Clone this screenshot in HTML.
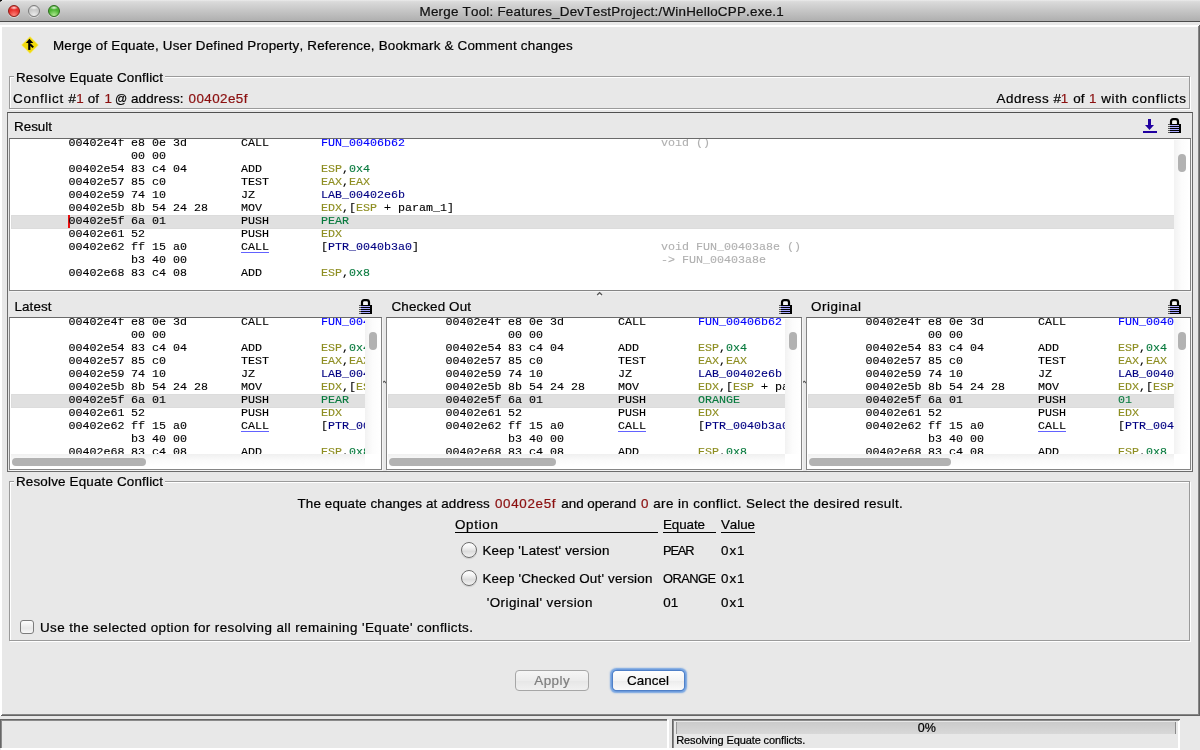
<!DOCTYPE html><html><head><meta charset="utf-8"><style>
html,body{margin:0;padding:0}
body{width:1200px;height:750px;position:relative;overflow:hidden;background:#e8e8e8;font-family:"Liberation Sans",sans-serif;font-kerning:none}
.t{position:absolute;white-space:pre;-webkit-text-stroke-width:0.22px}
.lst{position:absolute;border:1px solid #858585;border-top-color:#6a6a6a;box-shadow:1px 1px 0 #f4f4f4;background:#fff;overflow:hidden}
.m{position:absolute;white-space:pre;font-family:"Liberation Mono",monospace;font-size:11.667px;line-height:13px;height:13px;color:#000;font-kerning:none;-webkit-text-stroke-width:0.12px}
.hl{position:absolute;right:0;height:14px;background:#e0e0e0;box-shadow:inset 0 0 0 1px #dcdcdc}
.vs{position:absolute;background:linear-gradient(90deg,#f2f2f2,#fcfcfc 50%,#fff)}
.hs{position:absolute;background:linear-gradient(180deg,#f0f0f0,#fbfbfb 50%,#fff)}
.th{position:absolute;background:#b2b2b2;border-radius:4px}
#w{position:absolute;left:0;top:0;width:1200px;height:750px;will-change:transform}
</style></head><body><div id="w">
<div style="position:absolute;left:0px;top:0px;width:1200px;height:22px;background:linear-gradient(180deg,#ececec 0%,#dadada 8%,#c6c6c6 50%,#afafaf 100%);border-bottom:1px solid #4a4a4a;box-sizing:border-box"></div>
<div style="position:absolute;left:8px;top:5px;width:12px;height:12px;border-radius:50%;box-sizing:border-box;border:1px solid #8e1c16;background:radial-gradient(ellipse 4px 2px at 50% 18%,rgba(255,255,255,.85),rgba(255,255,255,0) 100%),radial-gradient(circle at 50% 95%,#ff8a80 0%,#e8302c 55%);box-shadow:0 1px 0.5px rgba(255,255,255,.45)"></div>
<div style="position:absolute;left:28px;top:5px;width:12px;height:12px;border-radius:50%;box-sizing:border-box;border:1px solid #7c7c7c;background:radial-gradient(ellipse 4px 2px at 50% 18%,rgba(255,255,255,.85),rgba(255,255,255,0) 100%),radial-gradient(circle at 50% 95%,#eeeeee 0%,#cacaca 55%);box-shadow:0 1px 0.5px rgba(255,255,255,.45)"></div>
<div style="position:absolute;left:48px;top:5px;width:12px;height:12px;border-radius:50%;box-sizing:border-box;border:1px solid #2c6e1c;background:radial-gradient(ellipse 4px 2px at 50% 18%,rgba(255,255,255,.85),rgba(255,255,255,0) 100%),radial-gradient(circle at 50% 95%,#b4ec96 0%,#4cb432 55%);box-shadow:0 1px 0.5px rgba(255,255,255,.45)"></div>
<div style="position:absolute;left:0;top:0;width:2px;height:1px;background:#111"></div><div style="position:absolute;left:0;top:1px;width:1px;height:1px;background:#555"></div>
<div class="t " style="left:419.50px;top:4px;line-height:15px;height:15px;font-size:13.4px;letter-spacing:0.230px;color:#111">Merge Tool: Features_DevTestProject:/WinHelloCPP.exe.1</div>
<div style="position:absolute;left:0px;top:25px;width:1200px;height:2px;background:#fff"></div>
<div style="position:absolute;left:0px;top:25px;width:2px;height:691px;background:#fff"></div>
<div style="position:absolute;left:1198px;top:26px;width:1px;height:690px;background:#868686"></div>
<div style="position:absolute;left:1199px;top:25px;width:1px;height:691px;background:#646464"></div>
<div style="position:absolute;left:2px;top:714px;width:1197px;height:1px;background:#868686"></div>
<div style="position:absolute;left:1px;top:715px;width:1199px;height:1px;background:#646464"></div>
<svg style="position:absolute;left:20px;top:35px" width="20" height="20" viewBox="20 35 20 20">
<polygon points="30,36.6 38.4,45 30,53.4 21.6,45" fill="#f2da0c" stroke="#f6ec80" stroke-opacity=".7" stroke-width="0.8"/>
<polygon points="29.4,38.7 33.3,42.9 25.9,42.9" fill="#000"/>
<rect x="28.2" y="42" width="2.2" height="7.9" fill="#000"/>
<path d="M30 44.2 L33.2 47.4" stroke="#000" stroke-width="2"/>
</svg>
<div class="t " style="left:53.00px;top:38px;line-height:15px;height:15px;font-size:13.4px;letter-spacing:0.198px;color:#000">Merge of Equate, User Defined Property, Reference, Bookmark &amp; Comment changes</div>
<div style="position:absolute;left:10px;top:77px;width:1181px;height:33px;border:1px solid #fff;box-sizing:border-box"></div>
<div style="position:absolute;left:9px;top:76px;width:1181px;height:33px;border:1px solid #9a9a9a;box-sizing:border-box"></div>
<div style="position:absolute;left:14px;top:70px;width:151px;height:14px;background:#e8e8e8"></div>
<div class="t " style="left:16.00px;top:70px;line-height:15px;height:15px;font-size:13.4px;letter-spacing:0.181px;color:#000">Resolve Equate Conflict</div>
<div class="t " style="left:13.00px;top:91px;line-height:15px;height:15px;font-size:13.4px;letter-spacing:0.794px;color:#000">Conflict #</div>
<div class="t " style="left:76.17px;top:91px;line-height:15px;height:15px;font-size:13.4px;letter-spacing:0.000px;color:#8b1010">1</div>
<div class="t " style="left:87.81px;top:91px;line-height:15px;height:15px;font-size:13.4px;letter-spacing:0.000px;color:#000">of</div>
<div class="t " style="left:104.42px;top:91px;line-height:15px;height:15px;font-size:13.4px;letter-spacing:0.000px;color:#8b1010">1</div>
<div class="t " style="left:115.01px;top:92px;line-height:14px;height:14px;font-size:12px;letter-spacing:0.000px;color:#000">@</div>
<div class="t " style="left:131.00px;top:91px;line-height:15px;height:15px;font-size:13.4px;letter-spacing:0.158px;color:#000">address:</div>
<div class="t " style="left:188.50px;top:91px;line-height:15px;height:15px;font-size:13.4px;letter-spacing:0.444px;color:#8b1010">00402e5f</div>
<div class="t " style="left:996.60px;top:91px;line-height:15px;height:15px;font-size:13.4px;letter-spacing:0.508px;color:#000">Address #</div>
<div class="t " style="left:1060.77px;top:91px;line-height:15px;height:15px;font-size:13.4px;letter-spacing:0.000px;color:#8b1010">1</div>
<div class="t " style="left:1073.21px;top:91px;line-height:15px;height:15px;font-size:13.4px;letter-spacing:0.000px;color:#000">of</div>
<div class="t " style="left:1088.92px;top:91px;line-height:15px;height:15px;font-size:13.4px;letter-spacing:0.000px;color:#8b1010">1</div>
<div class="t " style="left:1101.20px;top:91px;line-height:15px;height:15px;font-size:13.4px;letter-spacing:0.680px;color:#000">with conflicts</div>
<div style="position:absolute;left:7px;top:112px;width:1186px;height:360px;border:1px solid #6c6c6c;border-top-color:#505050;box-sizing:border-box"></div>
<div class="t " style="left:14.00px;top:119px;line-height:15px;height:15px;font-size:13.4px;letter-spacing:0.004px;color:#000">Result</div>
<svg style="position:absolute;left:1143px;top:119px" width="14" height="14" viewBox="0 0 14 14" shape-rendering="crispEdges">
<rect x="5" y="0" width="3" height="6" fill="#2000a0"/><polygon points="2,6 11,6 6.5,11" fill="#2000a0" shape-rendering="geometricPrecision"/><rect x="0" y="12" width="14" height="2" fill="#2000a0"/></svg>
<svg style="position:absolute;left:1168px;top:118px" width="13" height="15" viewBox="0 0 13 15" shape-rendering="crispEdges">
<path d="M3 7 V3.4 Q3 1.1 5.3 1.1 H7.7 Q10 1.1 10 3.4 V7" fill="#f6f6f6" stroke="#000" stroke-width="2.2" shape-rendering="geometricPrecision"/>
<rect x="2" y="6" width="11" height="9" fill="#000"/>
<rect x="2" y="7" width="9" height="1" fill="#a8a8ff"/><rect x="2" y="9" width="9" height="1" fill="#a8a8ff"/><rect x="2" y="11" width="9" height="1" fill="#a8a8ff"/><rect x="2" y="13" width="9" height="1" fill="#a8a8ff"/>
<rect x="0" y="6" width="2" height="1" fill="#555"/><rect x="0" y="8" width="2" height="1" fill="#555"/><rect x="0" y="10" width="2" height="1" fill="#555"/><rect x="0" y="12" width="2" height="1" fill="#555"/><rect x="0" y="14" width="2" height="1" fill="#555"/>
</svg>
<div class="lst" style="left:9px;top:138px;width:1180px;height:151px">
<div class="m" style="left:58.6px;top:-2px;">00402e4f</div>
<div class="m" style="left:121px;top:-2px;">e8 0e 3d</div>
<div class="m" style="left:231px;top:-2px;">CALL</div>
<div class="m" style="left:311px;top:-2px;"><span style="color:#0000ff">FUN_00406b62</span></div>
<div class="m" style="left:651px;top:-2px;color:#b0b0b0">void ()</div>
<div class="m" style="left:121px;top:11px;">00 00</div>
<div class="m" style="left:58.6px;top:24px;">00402e54</div>
<div class="m" style="left:121px;top:24px;">83 c4 04</div>
<div class="m" style="left:231px;top:24px;">ADD</div>
<div class="m" style="left:311px;top:24px;"><span style="color:#8e8e22">ESP</span>,<span style="color:#087a3e">0x4</span></div>
<div class="m" style="left:58.6px;top:37px;">00402e57</div>
<div class="m" style="left:121px;top:37px;">85 c0</div>
<div class="m" style="left:231px;top:37px;">TEST</div>
<div class="m" style="left:311px;top:37px;"><span style="color:#8e8e22">EAX</span>,<span style="color:#8e8e22">EAX</span></div>
<div class="m" style="left:58.6px;top:50px;">00402e59</div>
<div class="m" style="left:121px;top:50px;">74 10</div>
<div class="m" style="left:231px;top:50px;">JZ</div>
<div class="m" style="left:311px;top:50px;"><span style="color:#000082">LAB_00402e6b</span></div>
<div class="m" style="left:58.6px;top:63px;">00402e5b</div>
<div class="m" style="left:121px;top:63px;">8b 54 24 28</div>
<div class="m" style="left:231px;top:63px;">MOV</div>
<div class="m" style="left:311px;top:63px;"><span style="color:#8e8e22">EDX</span>,[<span style="color:#8e8e22">ESP</span> + param_1]</div>
<div class="hl" style="top:76px;left:1px"></div>
<div style="position:absolute;left:58px;top:76px;width:2px;height:13px;background:#e81010"></div>
<div class="m" style="left:58.6px;top:76px;">00402e5f</div>
<div class="m" style="left:121px;top:76px;">6a 01</div>
<div class="m" style="left:231px;top:76px;">PUSH</div>
<div class="m" style="left:311px;top:76px;"><span style="color:#087a3e">PEAR</span></div>
<div class="m" style="left:58.6px;top:89px;">00402e61</div>
<div class="m" style="left:121px;top:89px;">52</div>
<div class="m" style="left:231px;top:89px;">PUSH</div>
<div class="m" style="left:311px;top:89px;"><span style="color:#8e8e22">EDX</span></div>
<div class="m" style="left:58.6px;top:102px;">00402e62</div>
<div class="m" style="left:121px;top:102px;">ff 15 a0</div>
<div class="m" style="left:231px;top:102px;"><span style="border-bottom:1px solid #6262ff;display:inline-block;height:11px;line-height:13px">CALL</span></div>
<div class="m" style="left:311px;top:102px;">[<span style="color:#000082">PTR_0040b3a0</span>]</div>
<div class="m" style="left:651px;top:102px;color:#b0b0b0">void FUN_00403a8e ()</div>
<div class="m" style="left:121px;top:115px;">b3 40 00</div>
<div class="m" style="left:651px;top:115px;color:#b0b0b0">-&gt; FUN_00403a8e</div>
<div class="m" style="left:58.6px;top:128px;">00402e68</div>
<div class="m" style="left:121px;top:128px;">83 c4 08</div>
<div class="m" style="left:231px;top:128px;">ADD</div>
<div class="m" style="left:311px;top:128px;"><span style="color:#8e8e22">ESP</span>,<span style="color:#087a3e">0x8</span></div>
<div style="position:absolute;left:1164px;top:0;width:16px;height:151px;background:#fff"></div>
<div class="vs" style="left:1164px;top:1px;width:15px;height:150px"><div class="th" style="left:4px;top:14px;width:8px;height:18px"></div></div>
</div>
<svg style="position:absolute;left:596px;top:291px" width="8" height="6" viewBox="0 0 8 6"><path d="M1.2 4 L3.6 1.6 L6 4" fill="none" stroke="#555" stroke-width="1.3"/><path d="M2.5 4.6 L5 4.6" stroke="#fff" stroke-width="1"/></svg>
<svg style="position:absolute;left:381.5px;top:380px" width="5" height="5" viewBox="0 0 5 5"><path d="M0.3 3 L2.2 1.2 L4.2 3" fill="none" stroke="#555" stroke-width="1.1"/></svg>
<svg style="position:absolute;left:801.5px;top:380px" width="5" height="5" viewBox="0 0 5 5"><path d="M0.3 3 L2.2 1.2 L4.2 3" fill="none" stroke="#555" stroke-width="1.1"/></svg>
<div class="t " style="left:14.50px;top:299px;line-height:15px;height:15px;font-size:13.4px;letter-spacing:0.099px;color:#000">Latest</div>
<svg style="position:absolute;left:359px;top:299px" width="13" height="15" viewBox="0 0 13 15" shape-rendering="crispEdges">
<path d="M3 7 V3.4 Q3 1.1 5.3 1.1 H7.7 Q10 1.1 10 3.4 V7" fill="#f6f6f6" stroke="#000" stroke-width="2.2" shape-rendering="geometricPrecision"/>
<rect x="2" y="6" width="11" height="9" fill="#000"/>
<rect x="2" y="7" width="9" height="1" fill="#a8a8ff"/><rect x="2" y="9" width="9" height="1" fill="#a8a8ff"/><rect x="2" y="11" width="9" height="1" fill="#a8a8ff"/><rect x="2" y="13" width="9" height="1" fill="#a8a8ff"/>
<rect x="0" y="6" width="2" height="1" fill="#555"/><rect x="0" y="8" width="2" height="1" fill="#555"/><rect x="0" y="10" width="2" height="1" fill="#555"/><rect x="0" y="12" width="2" height="1" fill="#555"/><rect x="0" y="14" width="2" height="1" fill="#555"/>
</svg>
<div class="lst" style="left:9px;top:317px;width:371px;height:151px">
<div class="m" style="left:58.6px;top:-2px;">00402e4f</div>
<div class="m" style="left:121px;top:-2px;">e8 0e 3d</div>
<div class="m" style="left:231px;top:-2px;">CALL</div>
<div class="m" style="left:311px;top:-2px;"><span style="color:#0000ff">FUN_00406b62</span></div>
<div class="m" style="left:651px;top:-2px;color:#b0b0b0">void ()</div>
<div class="m" style="left:121px;top:11px;">00 00</div>
<div class="m" style="left:58.6px;top:24px;">00402e54</div>
<div class="m" style="left:121px;top:24px;">83 c4 04</div>
<div class="m" style="left:231px;top:24px;">ADD</div>
<div class="m" style="left:311px;top:24px;"><span style="color:#8e8e22">ESP</span>,<span style="color:#087a3e">0x4</span></div>
<div class="m" style="left:58.6px;top:37px;">00402e57</div>
<div class="m" style="left:121px;top:37px;">85 c0</div>
<div class="m" style="left:231px;top:37px;">TEST</div>
<div class="m" style="left:311px;top:37px;"><span style="color:#8e8e22">EAX</span>,<span style="color:#8e8e22">EAX</span></div>
<div class="m" style="left:58.6px;top:50px;">00402e59</div>
<div class="m" style="left:121px;top:50px;">74 10</div>
<div class="m" style="left:231px;top:50px;">JZ</div>
<div class="m" style="left:311px;top:50px;"><span style="color:#000082">LAB_00402e6b</span></div>
<div class="m" style="left:58.6px;top:63px;">00402e5b</div>
<div class="m" style="left:121px;top:63px;">8b 54 24 28</div>
<div class="m" style="left:231px;top:63px;">MOV</div>
<div class="m" style="left:311px;top:63px;"><span style="color:#8e8e22">EDX</span>,[<span style="color:#8e8e22">ESP</span> + param_1]</div>
<div class="hl" style="top:76px;left:1px"></div>
<div class="m" style="left:58.6px;top:76px;">00402e5f</div>
<div class="m" style="left:121px;top:76px;">6a 01</div>
<div class="m" style="left:231px;top:76px;">PUSH</div>
<div class="m" style="left:311px;top:76px;"><span style="color:#087a3e">PEAR</span></div>
<div class="m" style="left:58.6px;top:89px;">00402e61</div>
<div class="m" style="left:121px;top:89px;">52</div>
<div class="m" style="left:231px;top:89px;">PUSH</div>
<div class="m" style="left:311px;top:89px;"><span style="color:#8e8e22">EDX</span></div>
<div class="m" style="left:58.6px;top:102px;">00402e62</div>
<div class="m" style="left:121px;top:102px;">ff 15 a0</div>
<div class="m" style="left:231px;top:102px;"><span style="border-bottom:1px solid #6262ff;display:inline-block;height:11px;line-height:13px">CALL</span></div>
<div class="m" style="left:311px;top:102px;">[<span style="color:#000082">PTR_0040b3a0</span>]</div>
<div class="m" style="left:651px;top:102px;color:#b0b0b0">void FUN_00403a8e ()</div>
<div class="m" style="left:121px;top:115px;">b3 40 00</div>
<div class="m" style="left:651px;top:115px;color:#b0b0b0">-&gt; FUN_00403a8e</div>
<div class="m" style="left:58.6px;top:128px;">00402e68</div>
<div class="m" style="left:121px;top:128px;">83 c4 08</div>
<div class="m" style="left:231px;top:128px;">ADD</div>
<div class="m" style="left:311px;top:128px;"><span style="color:#8e8e22">ESP</span>,<span style="color:#087a3e">0x8</span></div>
<div style="position:absolute;left:0;top:136px;width:371px;height:15px;background:#fff"></div><div class="hs" style="left:1px;top:136px;width:354px;height:14px"><div class="th" style="left:1px;top:4px;width:134px;height:8px"></div></div>
<div style="position:absolute;left:355px;top:0;width:16px;height:136px;background:#fff"></div>
<div class="vs" style="left:355px;top:1px;width:15px;height:135px"><div class="th" style="left:4px;top:13px;width:8px;height:18px"></div></div>
</div>
<div class="t " style="left:391.50px;top:299px;line-height:15px;height:15px;font-size:13.4px;letter-spacing:0.129px;color:#000">Checked Out</div>
<svg style="position:absolute;left:779px;top:299px" width="13" height="15" viewBox="0 0 13 15" shape-rendering="crispEdges">
<path d="M3 7 V3.4 Q3 1.1 5.3 1.1 H7.7 Q10 1.1 10 3.4 V7" fill="#f6f6f6" stroke="#000" stroke-width="2.2" shape-rendering="geometricPrecision"/>
<rect x="2" y="6" width="11" height="9" fill="#000"/>
<rect x="2" y="7" width="9" height="1" fill="#a8a8ff"/><rect x="2" y="9" width="9" height="1" fill="#a8a8ff"/><rect x="2" y="11" width="9" height="1" fill="#a8a8ff"/><rect x="2" y="13" width="9" height="1" fill="#a8a8ff"/>
<rect x="0" y="6" width="2" height="1" fill="#555"/><rect x="0" y="8" width="2" height="1" fill="#555"/><rect x="0" y="10" width="2" height="1" fill="#555"/><rect x="0" y="12" width="2" height="1" fill="#555"/><rect x="0" y="14" width="2" height="1" fill="#555"/>
</svg>
<div class="lst" style="left:386px;top:317px;width:414px;height:151px">
<div class="m" style="left:58.6px;top:-2px;">00402e4f</div>
<div class="m" style="left:121px;top:-2px;">e8 0e 3d</div>
<div class="m" style="left:231px;top:-2px;">CALL</div>
<div class="m" style="left:311px;top:-2px;"><span style="color:#0000ff">FUN_00406b62</span></div>
<div class="m" style="left:651px;top:-2px;color:#b0b0b0">void ()</div>
<div class="m" style="left:121px;top:11px;">00 00</div>
<div class="m" style="left:58.6px;top:24px;">00402e54</div>
<div class="m" style="left:121px;top:24px;">83 c4 04</div>
<div class="m" style="left:231px;top:24px;">ADD</div>
<div class="m" style="left:311px;top:24px;"><span style="color:#8e8e22">ESP</span>,<span style="color:#087a3e">0x4</span></div>
<div class="m" style="left:58.6px;top:37px;">00402e57</div>
<div class="m" style="left:121px;top:37px;">85 c0</div>
<div class="m" style="left:231px;top:37px;">TEST</div>
<div class="m" style="left:311px;top:37px;"><span style="color:#8e8e22">EAX</span>,<span style="color:#8e8e22">EAX</span></div>
<div class="m" style="left:58.6px;top:50px;">00402e59</div>
<div class="m" style="left:121px;top:50px;">74 10</div>
<div class="m" style="left:231px;top:50px;">JZ</div>
<div class="m" style="left:311px;top:50px;"><span style="color:#000082">LAB_00402e6b</span></div>
<div class="m" style="left:58.6px;top:63px;">00402e5b</div>
<div class="m" style="left:121px;top:63px;">8b 54 24 28</div>
<div class="m" style="left:231px;top:63px;">MOV</div>
<div class="m" style="left:311px;top:63px;"><span style="color:#8e8e22">EDX</span>,[<span style="color:#8e8e22">ESP</span> + param_1]</div>
<div class="hl" style="top:76px;left:1px"></div>
<div class="m" style="left:58.6px;top:76px;">00402e5f</div>
<div class="m" style="left:121px;top:76px;">6a 01</div>
<div class="m" style="left:231px;top:76px;">PUSH</div>
<div class="m" style="left:311px;top:76px;"><span style="color:#087a3e">ORANGE</span></div>
<div class="m" style="left:58.6px;top:89px;">00402e61</div>
<div class="m" style="left:121px;top:89px;">52</div>
<div class="m" style="left:231px;top:89px;">PUSH</div>
<div class="m" style="left:311px;top:89px;"><span style="color:#8e8e22">EDX</span></div>
<div class="m" style="left:58.6px;top:102px;">00402e62</div>
<div class="m" style="left:121px;top:102px;">ff 15 a0</div>
<div class="m" style="left:231px;top:102px;"><span style="border-bottom:1px solid #6262ff;display:inline-block;height:11px;line-height:13px">CALL</span></div>
<div class="m" style="left:311px;top:102px;">[<span style="color:#000082">PTR_0040b3a0</span>]</div>
<div class="m" style="left:651px;top:102px;color:#b0b0b0">void FUN_00403a8e ()</div>
<div class="m" style="left:121px;top:115px;">b3 40 00</div>
<div class="m" style="left:651px;top:115px;color:#b0b0b0">-&gt; FUN_00403a8e</div>
<div class="m" style="left:58.6px;top:128px;">00402e68</div>
<div class="m" style="left:121px;top:128px;">83 c4 08</div>
<div class="m" style="left:231px;top:128px;">ADD</div>
<div class="m" style="left:311px;top:128px;"><span style="color:#8e8e22">ESP</span>,<span style="color:#087a3e">0x8</span></div>
<div style="position:absolute;left:0;top:136px;width:414px;height:15px;background:#fff"></div><div class="hs" style="left:1px;top:136px;width:397px;height:14px"><div class="th" style="left:1px;top:4px;width:167px;height:8px"></div></div>
<div style="position:absolute;left:398px;top:0;width:16px;height:136px;background:#fff"></div>
<div class="vs" style="left:398px;top:1px;width:15px;height:135px"><div class="th" style="left:4px;top:13px;width:8px;height:18px"></div></div>
</div>
<div class="t " style="left:811.00px;top:299px;line-height:15px;height:15px;font-size:13.4px;letter-spacing:0.547px;color:#000">Original</div>
<svg style="position:absolute;left:1168px;top:299px" width="13" height="15" viewBox="0 0 13 15" shape-rendering="crispEdges">
<path d="M3 7 V3.4 Q3 1.1 5.3 1.1 H7.7 Q10 1.1 10 3.4 V7" fill="#f6f6f6" stroke="#000" stroke-width="2.2" shape-rendering="geometricPrecision"/>
<rect x="2" y="6" width="11" height="9" fill="#000"/>
<rect x="2" y="7" width="9" height="1" fill="#a8a8ff"/><rect x="2" y="9" width="9" height="1" fill="#a8a8ff"/><rect x="2" y="11" width="9" height="1" fill="#a8a8ff"/><rect x="2" y="13" width="9" height="1" fill="#a8a8ff"/>
<rect x="0" y="6" width="2" height="1" fill="#555"/><rect x="0" y="8" width="2" height="1" fill="#555"/><rect x="0" y="10" width="2" height="1" fill="#555"/><rect x="0" y="12" width="2" height="1" fill="#555"/><rect x="0" y="14" width="2" height="1" fill="#555"/>
</svg>
<div class="lst" style="left:806px;top:317px;width:383px;height:151px">
<div class="m" style="left:58.6px;top:-2px;">00402e4f</div>
<div class="m" style="left:121px;top:-2px;">e8 0e 3d</div>
<div class="m" style="left:231px;top:-2px;">CALL</div>
<div class="m" style="left:311px;top:-2px;"><span style="color:#0000ff">FUN_00406b62</span></div>
<div class="m" style="left:651px;top:-2px;color:#b0b0b0">void ()</div>
<div class="m" style="left:121px;top:11px;">00 00</div>
<div class="m" style="left:58.6px;top:24px;">00402e54</div>
<div class="m" style="left:121px;top:24px;">83 c4 04</div>
<div class="m" style="left:231px;top:24px;">ADD</div>
<div class="m" style="left:311px;top:24px;"><span style="color:#8e8e22">ESP</span>,<span style="color:#087a3e">0x4</span></div>
<div class="m" style="left:58.6px;top:37px;">00402e57</div>
<div class="m" style="left:121px;top:37px;">85 c0</div>
<div class="m" style="left:231px;top:37px;">TEST</div>
<div class="m" style="left:311px;top:37px;"><span style="color:#8e8e22">EAX</span>,<span style="color:#8e8e22">EAX</span></div>
<div class="m" style="left:58.6px;top:50px;">00402e59</div>
<div class="m" style="left:121px;top:50px;">74 10</div>
<div class="m" style="left:231px;top:50px;">JZ</div>
<div class="m" style="left:311px;top:50px;"><span style="color:#000082">LAB_00402e6b</span></div>
<div class="m" style="left:58.6px;top:63px;">00402e5b</div>
<div class="m" style="left:121px;top:63px;">8b 54 24 28</div>
<div class="m" style="left:231px;top:63px;">MOV</div>
<div class="m" style="left:311px;top:63px;"><span style="color:#8e8e22">EDX</span>,[<span style="color:#8e8e22">ESP</span> + param_1]</div>
<div class="hl" style="top:76px;left:1px"></div>
<div class="m" style="left:58.6px;top:76px;">00402e5f</div>
<div class="m" style="left:121px;top:76px;">6a 01</div>
<div class="m" style="left:231px;top:76px;">PUSH</div>
<div class="m" style="left:311px;top:76px;"><span style="color:#087a3e">01</span></div>
<div class="m" style="left:58.6px;top:89px;">00402e61</div>
<div class="m" style="left:121px;top:89px;">52</div>
<div class="m" style="left:231px;top:89px;">PUSH</div>
<div class="m" style="left:311px;top:89px;"><span style="color:#8e8e22">EDX</span></div>
<div class="m" style="left:58.6px;top:102px;">00402e62</div>
<div class="m" style="left:121px;top:102px;">ff 15 a0</div>
<div class="m" style="left:231px;top:102px;"><span style="border-bottom:1px solid #6262ff;display:inline-block;height:11px;line-height:13px">CALL</span></div>
<div class="m" style="left:311px;top:102px;">[<span style="color:#000082">PTR_0040b3a0</span>]</div>
<div class="m" style="left:651px;top:102px;color:#b0b0b0">void FUN_00403a8e ()</div>
<div class="m" style="left:121px;top:115px;">b3 40 00</div>
<div class="m" style="left:651px;top:115px;color:#b0b0b0">-&gt; FUN_00403a8e</div>
<div class="m" style="left:58.6px;top:128px;">00402e68</div>
<div class="m" style="left:121px;top:128px;">83 c4 08</div>
<div class="m" style="left:231px;top:128px;">ADD</div>
<div class="m" style="left:311px;top:128px;"><span style="color:#8e8e22">ESP</span>,<span style="color:#087a3e">0x8</span></div>
<div style="position:absolute;left:0;top:136px;width:383px;height:15px;background:#fff"></div><div class="hs" style="left:1px;top:136px;width:366px;height:14px"><div class="th" style="left:1px;top:4px;width:142px;height:8px"></div></div>
<div style="position:absolute;left:367px;top:0;width:16px;height:136px;background:#fff"></div>
<div class="vs" style="left:367px;top:1px;width:15px;height:135px"><div class="th" style="left:4px;top:13px;width:8px;height:18px"></div></div>
</div>
<div style="position:absolute;left:10px;top:482px;width:1181px;height:160px;border:1px solid #fff;box-sizing:border-box"></div>
<div style="position:absolute;left:9px;top:481px;width:1181px;height:160px;border:1px solid #9a9a9a;box-sizing:border-box"></div>
<div style="position:absolute;left:14px;top:474px;width:151px;height:14px;background:#e8e8e8"></div>
<div class="t " style="left:16.00px;top:474px;line-height:15px;height:15px;font-size:13.4px;letter-spacing:0.181px;color:#000">Resolve Equate Conflict</div>
<div class="t " style="left:297.50px;top:496px;line-height:15px;height:15px;font-size:13.4px;letter-spacing:0.137px;color:#000">The equate changes at address</div>
<div class="t " style="left:495.00px;top:496px;line-height:15px;height:15px;font-size:13.4px;letter-spacing:0.673px;color:#8b1010">00402e5f</div>
<div class="t " style="left:561.30px;top:496px;line-height:15px;height:15px;font-size:13.4px;letter-spacing:-0.026px;color:#000">and operand</div>
<div class="t " style="left:641.07px;top:496px;line-height:15px;height:15px;font-size:13.4px;letter-spacing:0.000px;color:#8b1010">0</div>
<div class="t " style="left:653.30px;top:496px;line-height:15px;height:15px;font-size:13.4px;letter-spacing:0.377px;color:#000">are in conflict. Select the desired result.</div>
<div class="t " style="left:455.00px;top:517px;line-height:15px;height:15px;font-size:13.4px;letter-spacing:0.704px;color:#000">Option</div>
<div style="position:absolute;left:455px;top:532px;width:203px;height:1px;background:#000"></div>
<div class="t " style="left:663.00px;top:517px;line-height:15px;height:15px;font-size:13.4px;letter-spacing:-0.094px;color:#000">Equate</div>
<div style="position:absolute;left:663px;top:532px;width:53px;height:1px;background:#000"></div>
<div class="t " style="left:721.00px;top:517px;line-height:15px;height:15px;font-size:13.4px;letter-spacing:-0.069px;color:#000">Value</div>
<div style="position:absolute;left:721px;top:532px;width:34px;height:1px;background:#000"></div>
<div style="position:absolute;left:461px;top:542px;width:16px;height:16px;border-radius:50%;box-sizing:border-box;border:1px solid #6c6c6c;background:linear-gradient(180deg,#ffffff 0%,#f4f4f4 30%,#dcdcdc 60%,#f2f2f2 100%);box-shadow:0 1px 1px rgba(0,0,0,.12)"></div>
<div class="t " style="left:482.50px;top:543px;line-height:15px;height:15px;font-size:13.4px;letter-spacing:0.172px;color:#000">Keep 'Latest' version</div>
<div class="t " style="left:663.00px;top:543px;line-height:15px;height:15px;font-size:12.8px;letter-spacing:-1.119px;color:#000">PEAR</div>
<div class="t " style="left:721.00px;top:543px;line-height:15px;height:15px;font-size:13.4px;letter-spacing:0.948px;color:#000">0x1</div>
<div style="position:absolute;left:461px;top:570px;width:16px;height:16px;border-radius:50%;box-sizing:border-box;border:1px solid #6c6c6c;background:linear-gradient(180deg,#ffffff 0%,#f4f4f4 30%,#dcdcdc 60%,#f2f2f2 100%);box-shadow:0 1px 1px rgba(0,0,0,.12)"></div>
<div class="t " style="left:482.50px;top:571px;line-height:15px;height:15px;font-size:13.4px;letter-spacing:0.189px;color:#000">Keep 'Checked Out' version</div>
<div class="t " style="left:663.00px;top:571px;line-height:15px;height:15px;font-size:12.8px;letter-spacing:-0.495px;color:#000">ORANGE</div>
<div class="t " style="left:721.00px;top:571px;line-height:15px;height:15px;font-size:13.4px;letter-spacing:0.948px;color:#000">0x1</div>
<div class="t " style="left:486.70px;top:595px;line-height:15px;height:15px;font-size:13.4px;letter-spacing:0.446px;color:#000">'Original' version</div>
<div class="t " style="left:663.30px;top:595px;line-height:15px;height:15px;font-size:13.4px;letter-spacing:0.000px;color:#000">01</div>
<div class="t " style="left:721.00px;top:595px;line-height:15px;height:15px;font-size:13.4px;letter-spacing:0.948px;color:#000">0x1</div>
<div style="position:absolute;left:20px;top:620px;width:14px;height:14px;border-radius:3px;box-sizing:border-box;border:1px solid #7c7c7c;background:linear-gradient(180deg,#fdfdfd,#e8e8e8 60%,#f8f8f8)"></div>
<div class="t " style="left:40.00px;top:620px;line-height:15px;height:15px;font-size:13.4px;letter-spacing:0.423px;color:#000">Use the selected option for resolving all remaining 'Equate' conflicts.</div>
<div style="position:absolute;left:515px;top:670px;width:74px;height:21px;box-sizing:border-box;border:1px solid #a6a6a6;border-radius:4px;background:linear-gradient(180deg,#f6f6f6,#ececec 50%,#e6e6e6 51%,#f0f0f0)"></div>
<div class="t " style="left:534.30px;top:673px;line-height:15px;height:15px;font-size:13.4px;letter-spacing:0.445px;color:#7e7e7e">Apply</div>
<div style="position:absolute;left:612.5px;top:670.5px;width:71px;height:19.5px;box-sizing:border-box;border-radius:4px;background:linear-gradient(180deg,#ffffff,#f4f4f4 50%,#ececec 51%,#fafafa);box-shadow:0 0 0 1.2px #4f80c8,0 0 1.5px 2.3px rgba(95,150,225,.85)"></div>
<div class="t " style="left:627.00px;top:673px;line-height:15px;height:15px;font-size:13.4px;letter-spacing:0.058px;color:#000">Cancel</div>
<div style="position:absolute;left:0px;top:716px;width:1200px;height:3px;background:#e8e8e8"></div>
<div style="position:absolute;left:0px;top:719px;width:667px;height:1px;background:#666"></div>
<div style="position:absolute;left:1px;top:720px;width:666px;height:1px;background:#8a8a8a"></div>
<div style="position:absolute;left:0px;top:719px;width:1px;height:29px;background:#666"></div>
<div style="position:absolute;left:1px;top:720px;width:1px;height:28px;background:#8a8a8a"></div>
<div style="position:absolute;left:667px;top:720px;width:2px;height:28px;background:#fff"></div>
<div style="position:absolute;left:1px;top:748px;width:1179px;height:2px;background:#fff"></div>
<div style="position:absolute;left:672px;top:719px;width:508px;height:1px;background:#666"></div>
<div style="position:absolute;left:673px;top:720px;width:506px;height:1px;background:#8a8a8a"></div>
<div style="position:absolute;left:672px;top:719px;width:1px;height:29px;background:#666"></div>
<div style="position:absolute;left:673px;top:720px;width:1px;height:28px;background:#8a8a8a"></div>
<div style="position:absolute;left:1178px;top:721px;width:2px;height:29px;background:#fff"></div>
<div style="position:absolute;left:676px;top:722px;width:500px;height:12px;background:linear-gradient(180deg,#cbcbcb,#d8d8d8);border-left:1px solid #9a9a9a;border-right:1px solid #8a8a8a;box-sizing:border-box"></div>
<div class="t " style="left:917.87px;top:721px;line-height:14px;height:14px;font-size:12.5px;letter-spacing:0.000px;color:#000">0%</div>
<div class="t " style="left:676.30px;top:734px;line-height:12px;height:12px;font-size:11px;letter-spacing:-0.118px;color:#000">Resolving Equate conflicts.</div>
</div></body></html>
